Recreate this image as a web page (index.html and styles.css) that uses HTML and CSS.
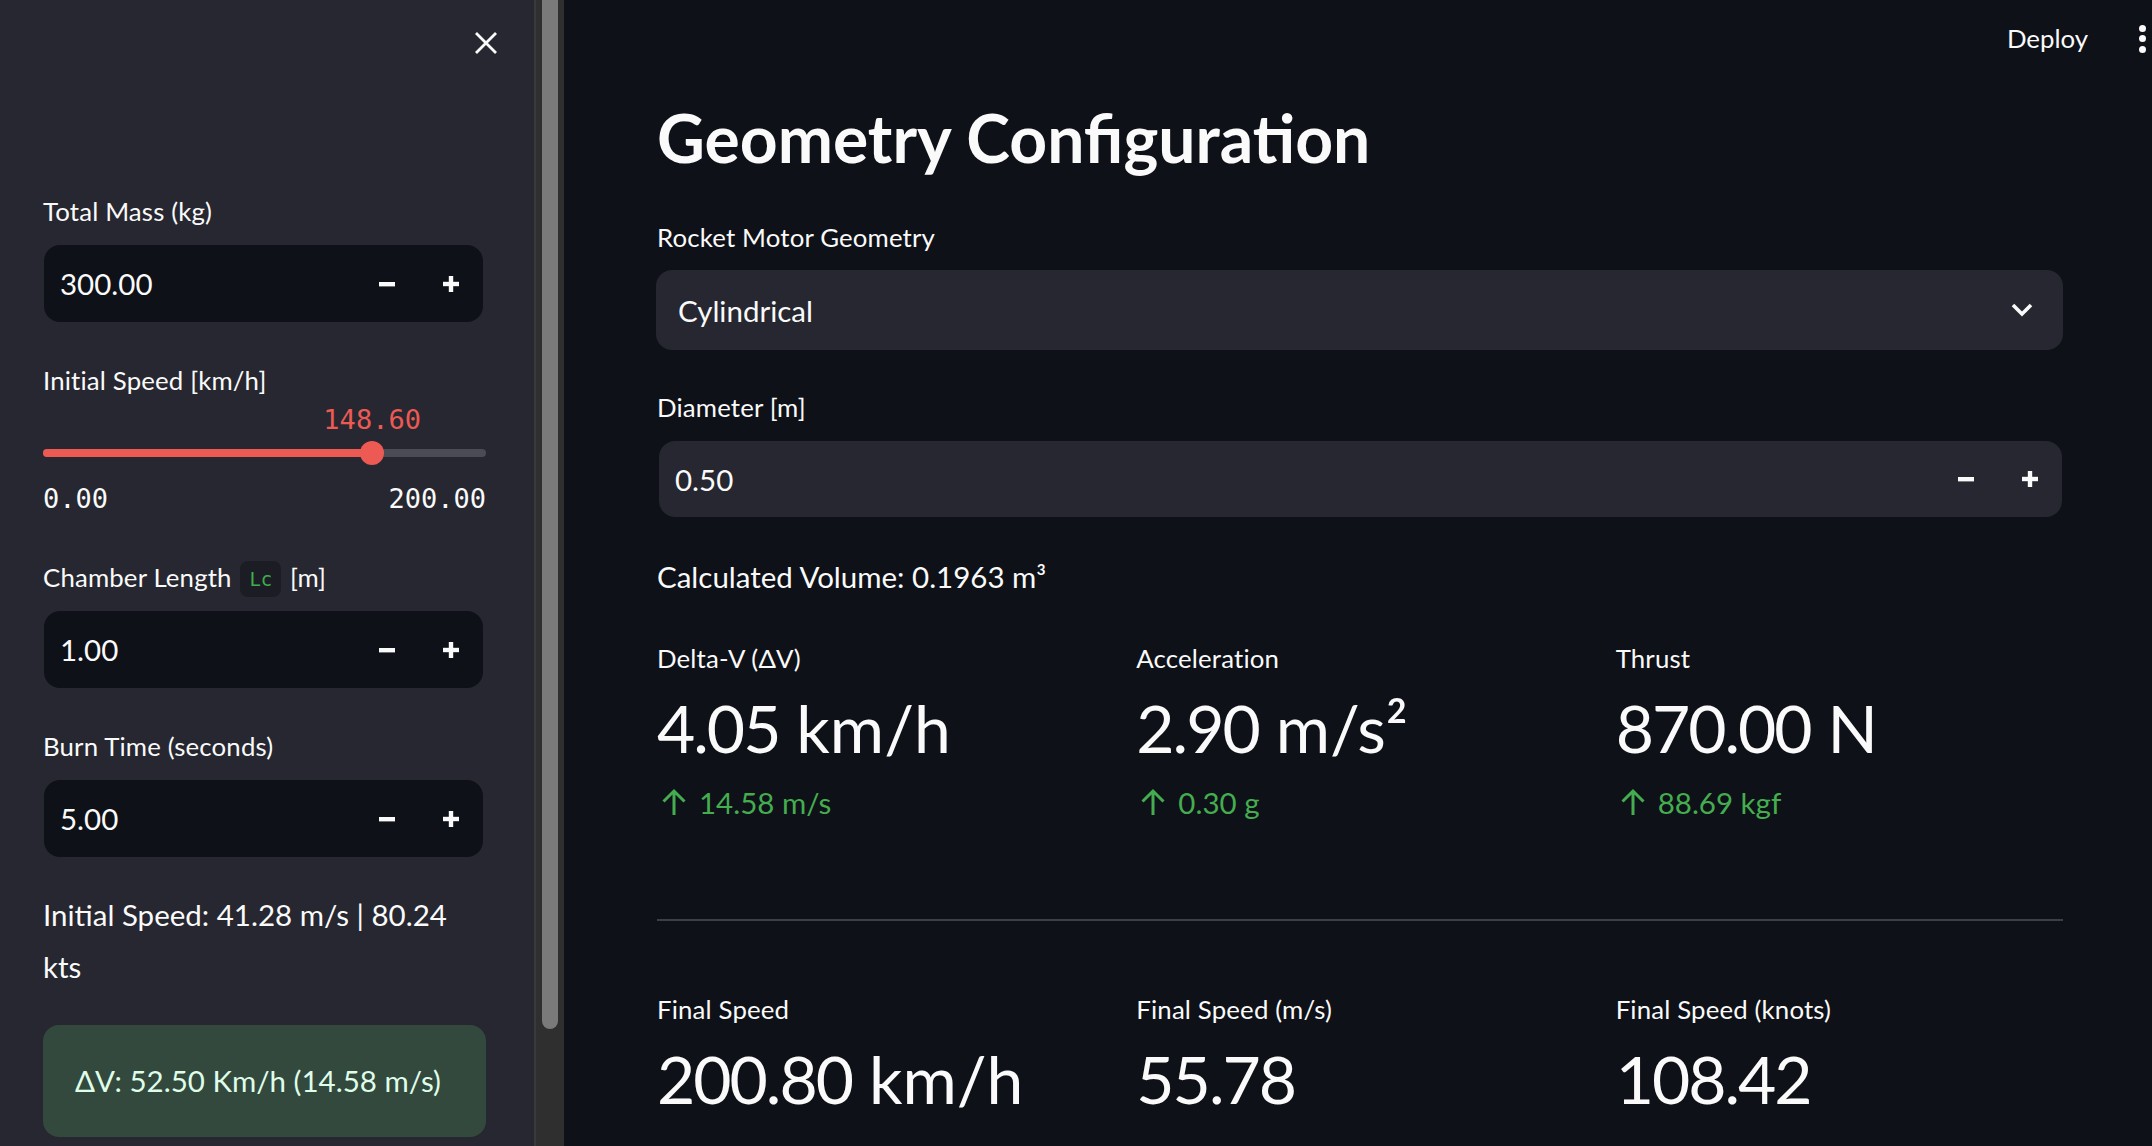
FILE: index.html
```html
<!DOCTYPE html>
<html lang="en">
<head>
<meta charset="utf-8">
<title>Geometry Configuration</title>
<link rel="stylesheet" href="styles.css">
</head>
<body>
<div class="app">
  <aside class="sidebar">
    <div class="sidebar-body">
      <div class="sidebar-header">
        <svg class="close-icon" width="24" height="24" viewBox="0 0 24 24"><path d="M2 2 L22 22 M22 2 L2 22" stroke="#fafafa" stroke-width="2.8" fill="none"/></svg>
      </div>
      <div class="sidebar-content">
        <div class="widget">
          <div class="label">Total Mass (kg)</div>
          <div class="num-input dark">
            <span class="num-value">300.00</span>
            <div class="steppers">
              <span class="step"><svg width="16" height="16" viewBox="0 0 16 16"><rect x="0" y="6" width="16" height="4.4" fill="#fafafa"/></svg></span>
              <span class="step"><svg width="16" height="16" viewBox="0 0 16 16"><rect x="0" y="5.8" width="16" height="4.4" fill="#fafafa"/><rect x="5.8" y="0" width="4.4" height="16" fill="#fafafa"/></svg></span>
            </div>
          </div>
        </div>
        <div class="widget gap36">
          <div class="label slider-label">Initial Speed [km/h]</div>
          <div class="slider">
            <div class="slider-value-row"><span class="slider-value" style="left:74.3%">148.60</span></div>
            <div class="slider-track-wrap">
              <div class="slider-track">
                <div class="slider-fill" style="width:74.3%"><span class="slider-thumb"></span></div>
              </div>
            </div>
            <div class="slider-minmax"><span>0.00</span><span>200.00</span></div>
          </div>
        </div>
        <div class="widget gap36">
          <div class="label">Chamber Length <code class="chip">Lc</code> [m]</div>
          <div class="num-input dark">
            <span class="num-value">1.00</span>
            <div class="steppers">
              <span class="step"><svg width="16" height="16" viewBox="0 0 16 16"><rect x="0" y="6" width="16" height="4.4" fill="#fafafa"/></svg></span>
              <span class="step"><svg width="16" height="16" viewBox="0 0 16 16"><rect x="0" y="5.8" width="16" height="4.4" fill="#fafafa"/><rect x="5.8" y="0" width="4.4" height="16" fill="#fafafa"/></svg></span>
            </div>
          </div>
        </div>
        <div class="widget gap36">
          <div class="label">Burn Time (seconds)</div>
          <div class="num-input dark">
            <span class="num-value">5.00</span>
            <div class="steppers">
              <span class="step"><svg width="16" height="16" viewBox="0 0 16 16"><rect x="0" y="6" width="16" height="4.4" fill="#fafafa"/></svg></span>
              <span class="step"><svg width="16" height="16" viewBox="0 0 16 16"><rect x="0" y="5.8" width="16" height="4.4" fill="#fafafa"/><rect x="5.8" y="0" width="4.4" height="16" fill="#fafafa"/></svg></span>
            </div>
          </div>
        </div>
        <p class="md side-md">Initial Speed: 41.28 m/s | 80.24 kts</p>
        <div class="alert">ΔV: 52.50 Km/h (14.58 m/s)</div>
      </div>
    </div>
    <div class="scrollbar"><div class="scroll-thumb"></div></div>
  </aside>

  <main class="main">
    <header class="toolbar">
      <span class="deploy">Deploy</span>
      <span class="kebab"><i></i><i></i><i></i></span>
    </header>
    <section class="content">
      <h1 class="title">Geometry Configuration</h1>

      <div class="widget gap37">
        <div class="label label-main">Rocket Motor Geometry</div>
        <div class="select">
          <span class="select-value">Cylindrical</span>
          <svg class="chevron" width="22" height="14" viewBox="0 0 22 14"><path d="M2 2 L11 11 L20 2" stroke="#fafafa" stroke-width="3.6" fill="none"/></svg>
        </div>
      </div>

      <div class="widget gap35">
        <div class="label">Diameter [m]</div>
        <div class="num-input light">
          <span class="num-value">0.50</span>
          <div class="steppers">
            <span class="step"><svg width="16" height="16" viewBox="0 0 16 16"><rect x="0" y="6" width="16" height="4.4" fill="#fafafa"/></svg></span>
            <span class="step"><svg width="16" height="16" viewBox="0 0 16 16"><rect x="0" y="5.8" width="16" height="4.4" fill="#fafafa"/><rect x="5.8" y="0" width="4.4" height="16" fill="#fafafa"/></svg></span>
          </div>
        </div>
      </div>

      <p class="md volume">Calculated Volume: 0.1963 m³</p>

      <div class="metrics first-row">
        <div class="metric">
          <div class="metric-label">Delta-V (ΔV)</div>
          <div class="metric-value"><span class="num">4.05</span> km/h</div>
          <div class="metric-delta"><svg width="26" height="28" viewBox="0 0 26 28"><path d="M13 27 V3 M2.5 13.5 L13 3 L23.5 13.5" stroke="#44ad4f" stroke-width="3" fill="none"/></svg><span>14.58 m/s</span></div>
        </div>
        <div class="metric">
          <div class="metric-label">Acceleration</div>
          <div class="metric-value"><span class="num">2.90</span> m/s²</div>
          <div class="metric-delta"><svg width="26" height="28" viewBox="0 0 26 28"><path d="M13 27 V3 M2.5 13.5 L13 3 L23.5 13.5" stroke="#44ad4f" stroke-width="3" fill="none"/></svg><span>0.30 g</span></div>
        </div>
        <div class="metric">
          <div class="metric-label">Thrust</div>
          <div class="metric-value"><span class="num">870.00</span> N</div>
          <div class="metric-delta"><svg width="26" height="28" viewBox="0 0 26 28"><path d="M13 27 V3 M2.5 13.5 L13 3 L23.5 13.5" stroke="#44ad4f" stroke-width="3" fill="none"/></svg><span>88.69 kgf</span></div>
        </div>
      </div>

      <hr class="divider">

      <div class="metrics second-row">
        <div class="metric">
          <div class="metric-label">Final Speed</div>
          <div class="metric-value"><span class="num">200.80</span> km/h</div>
        </div>
        <div class="metric">
          <div class="metric-label">Final Speed (m/s)</div>
          <div class="metric-value"><span class="num">55.78</span></div>
        </div>
        <div class="metric">
          <div class="metric-label">Final Speed (knots)</div>
          <div class="metric-value"><span class="num">108.42</span></div>
        </div>
      </div>
    </section>
  </main>
</div>
</body>
</html>
```

FILE: styles.css
```css
* { box-sizing: border-box; }

html, body {
  margin: 0;
  padding: 0;
  height: 1146px;
  overflow: hidden;
  background: #0e1117;
  color: #fafafa;
  font-family: "Lato", "Noto Sans", sans-serif;
}

.app {
  display: flex;
  height: 1146px;
}

/* ---------- Sidebar ---------- */
.sidebar {
  display: flex;
  width: 564px;
  flex: none;
  height: 100%;
}

.sidebar-body {
  width: 534px;
  background: #262730;
  height: 100%;
  display: flex;
  flex-direction: column;
}

.sidebar-header {
  height: 189px;
  padding: 31px 36px 0 0;
  display: flex;
  justify-content: flex-end;
  align-items: flex-start;
  flex: none;
}

.sidebar-content {
  padding: 0 48px 0 43px;
  display: flex;
  flex-direction: column;
}

.scrollbar {
  width: 30px;
  height: 100%;
  background: #2f2f2f;
  border-left: 2px solid #3a3a3d;
  padding: 0 6px 0 6px;
}

.scroll-thumb {
  width: 16px;
  height: 1029px;
  background: #7a7a7a;
  border-radius: 0 0 8px 8px;
}

.gap35 { margin-top: 35px; }
.gap36 { margin-top: 36px; }
.gap37 { margin-top: 37px; }

.label {
  font-size: 25.8px;
  line-height: 44px;
  height: 44px;
  margin-bottom: 12px;
  white-space: nowrap;
  letter-spacing: 0.15px;
}

.label-main { margin-bottom: 11px; }

.slider-label { margin-bottom: 0; }

.chip {
  display: inline-block;
  font-family: "DejaVu Sans Mono", monospace;
  font-size: 19px;
  line-height: 36px;
  height: 36px;
  padding: 0 9px;
  margin: 0 2px;
  background: #1c1d24;
  color: #3fae4f;
  border-radius: 8px;
  vertical-align: 1px;
  letter-spacing: 0;
}

/* number input */
.num-input {
  display: flex;
  align-items: center;
  height: 77px;
  border-radius: 16px;
  padding-left: 16px;
}

.num-input.dark {
  background: #0e1117;
  margin: 0 3px 0 1px;
}

.num-input.light {
  background: #262730;
  height: 76px;
  margin: 0 1px 0 2px;
}

.num-value {
  flex: 1;
  font-size: 29.5px;
}

.steppers {
  display: flex;
  height: 100%;
}

.step {
  width: 64px;
  height: 100%;
  display: flex;
  align-items: center;
  justify-content: center;
}

/* slider */
.slider {
  height: 117px;
  padding-bottom: 5px;
}

.slider-value-row {
  position: relative;
  height: 33px;
  padding-top: 3px;
}

.slider-value {
  position: absolute;
  top: 3px;
  transform: translateX(-50%);
  font-family: "DejaVu Sans Mono", monospace;
  font-size: 27px;
  line-height: 30px;
  color: #ec5a53;
}

.slider-track-wrap {
  height: 36px;
  display: flex;
  align-items: center;
}

.slider-track {
  width: 100%;
  height: 8px;
  border-radius: 4px;
  background: #4a4b54;
}

.slider-fill {
  position: relative;
  height: 100%;
  background: #ec5a53;
  border-radius: 4px;
}

.slider-thumb {
  position: absolute;
  right: -12px;
  top: -8px;
  width: 24px;
  height: 24px;
  border-radius: 50%;
  background: #ec5a53;
}

.slider-minmax {
  margin-top: 13px;
  display: flex;
  justify-content: space-between;
  font-family: "DejaVu Sans Mono", monospace;
  font-size: 27px;
  line-height: 30px;
  height: 30px;
}

.md {
  margin: 0;
  font-size: 29.5px;
  line-height: 52px;
}

.side-md { margin-top: 32px; }

.alert {
  margin-top: 32px;
  background: #33493d;
  color: #dffde9;
  border-radius: 16px;
  padding: 32px 32px;
  font-size: 29.5px;
  line-height: 48px;
  height: 112px;
}

/* ---------- Main ---------- */
.main {
  flex: 1;
  display: flex;
  flex-direction: column;
  min-width: 0;
}

.toolbar {
  height: 98px;
  flex: none;
  display: flex;
  justify-content: flex-end;
  align-items: flex-start;
  padding: 16px 6px 0 0;
}

.deploy {
  font-size: 25.8px;
  line-height: 44px;
  margin-right: 51px;
}

.kebab {
  display: flex;
  flex-direction: column;
  gap: 3.3px;
  padding-top: 9px;
}

.kebab i {
  display: block;
  width: 7px;
  height: 7px;
  border-radius: 50%;
  background: #fafafa;
}

.content {
  padding: 0 89px 0 93px;
  display: flex;
  flex-direction: column;
}

.title {
  margin: 0;
  font-size: 66px;
  font-weight: 700;
  line-height: 80px;
  height: 80px;
  white-space: nowrap;
}

.select {
  height: 80px;
  background: #262730;
  border-radius: 16px;
  display: flex;
  align-items: center;
  padding: 0 30px 0 22px;
  margin-left: -1px;
}

.select-value {
  flex: 1;
  font-size: 29.5px;
}

.volume { margin-top: 34px; }

.metrics {
  display: grid;
  grid-template-columns: repeat(3, 1fr);
  column-gap: 32px;
}

.first-row { margin-top: 33px; }

.metric-label {
  font-size: 25.8px;
  line-height: 44px;
  height: 44px;
  margin-bottom: 8px;
  white-space: nowrap;
  letter-spacing: 0.15px;
}

.metric-value {
  font-size: 66px;
  line-height: 80px;
  height: 80px;
  white-space: nowrap;
}

.metric-value .num {
  letter-spacing: -2px;
}

.metric-delta {
  margin-top: 12px;
  display: flex;
  align-items: center;
  height: 44px;
  color: #44ad4f;
  font-size: 29.5px;
  gap: 12px;
  padding-left: 4px;
}

.divider {
  margin: 95px 0 0 0;
  border: 0;
  height: 2px;
  background: #3d3f44;
}

.second-row { margin-top: 66px; }
```
